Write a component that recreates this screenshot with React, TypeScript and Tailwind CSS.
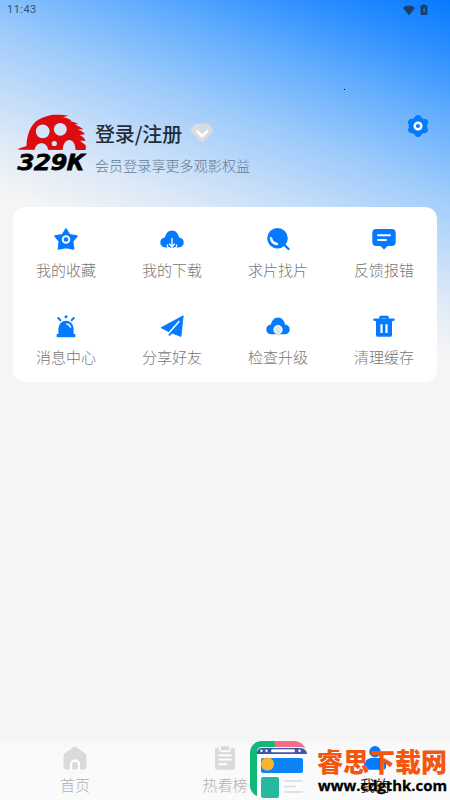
import type { ReactNode } from "react";

type Item = { label: string; icon: ReactNode };

const BLUE = "#067aff";

/* ── Menu icons, all on a 24 unit grid ── */
const menu: Item[] = [
  {
    label: "我的收藏",
    icon: (
      <>
        <path
          d="M12 2l3.500 5.700 7.500 1.300-4.300 5.400.9 7.600-7.600-1.500-7.600 1.500.9-7.600L1 9l7.500-1.300z"
          fill={BLUE}
          stroke={BLUE}
          strokeWidth="1.500"
          strokeLinejoin="round"
        />
        <circle cx="12" cy="12.500" r="3.300" fill="none" stroke="#fff" strokeWidth="1.900" />
      </>
    ),
  },
  {
    label: "我的下载",
    icon: (
      <>
        <path
          d="M5.600 20.500C2.400 20.500.3 18.500.3 15.600c0-2.700 1.900-4.800 4.600-5C5.800 6.400 8.400 3.600 12 3.600s6.200 2.800 7.100 7c2.700.2 4.600 2.300 4.600 5 0 2.900-2.100 4.900-5.300 4.900z"
          fill={BLUE}
        />
        <path d="M12 11v8.500M9.200 16.800l2.800 2.900 2.800-2.900" fill="none" stroke="#fff" strokeWidth="1.300" />
        <path d="M7.200 17.500c0 2 1 3.500 2.800 4M16.800 17.500c0 2-1 3.500-2.800 4" fill="none" stroke="#fff" strokeWidth="1.200" />
      </>
    ),
  },
  {
    label: "求片找片",
    icon: (
      <>
        <circle cx="11.500" cy="11.300" r="10.300" fill={BLUE} />
        <path d="M17.500 17l5 5" stroke={BLUE} strokeWidth="2.300" strokeLinecap="round" />
        <path d="M5 11.300c.5 3 2.700 5.200 5.900 5.600" fill="none" stroke="#fff" strokeWidth="2.500" strokeLinecap="round" />
      </>
    ),
  },
  {
    label: "反馈报错",
    icon: (
      <>
        <path
          d="M4 2h16c2.200 0 3.700 1.500 3.700 3.700v9.600c0 2.200-1.500 3.700-3.700 3.700h-4.500L12 22.500 8.500 19H4C1.800 19 .3 17.500.3 15.300V5.700C.3 3.500 1.800 2 4 2z"
          fill={BLUE}
        />
        <path d="M6 8.300h12M6 13h8" stroke="#fff" strokeWidth="1.900" strokeLinecap="round" />
      </>
    ),
  },
  {
    label: "消息中心",
    icon: (
      <>
        <path d="M4.400 20V14.300a7.600 7.600 0 0 1 15.200 0V20h1.700v3.200H2.700V20z" fill={BLUE} />
        <circle cx="12" cy="2.800" r="1.500" fill={BLUE} />
        <path d="M4.200 4l2.200 2.200M19.800 4l-2.200 2.200" stroke={BLUE} strokeWidth="2" strokeLinecap="round" />
        <path d="M13 9.900c1.900.3 3 1.400 3.400 3.300" fill="none" stroke="#fff" strokeWidth="1.500" strokeLinecap="round" />
      </>
    ),
  },
  {
    label: "分享好友",
    icon: (
      <>
        <path
          d="M23.200 1.800L21 22.500l-8.500-3.300L9.200 21.600 8 17.200 1 13.700z"
          fill={BLUE}
          stroke={BLUE}
          strokeWidth=".8"
          strokeLinejoin="round"
        />
        <path d="M19 7.500L8.400 19.500" stroke="#fff" strokeWidth="1.600" strokeLinecap="round" />
      </>
    ),
  },
  {
    label: "检查升级",
    icon: (
      <>
        <path
          d="M5.600 20.300C2.400 20.300.3 18.300.3 15.400c0-2.700 1.900-4.700 4.600-5C5.800 6.200 8.400 3.400 12 3.400s6.200 2.800 7.100 7c2.700.3 4.600 2.300 4.600 5 0 2.900-2.100 4.900-5.300 4.900z"
          fill={BLUE}
        />
        <circle cx="12" cy="15.700" r="4.700" fill="#f1f4f8" />
        <path d="M12 11.500l4.300 4.700h-2.600v5.400h-3.400v-5.400H7.700z" fill="#e0e2e4" />
      </>
    ),
  },
  {
    label: "清理缓存",
    icon: (
      <>
        <path d="M8.500 6V3h7v3" fill="none" stroke={BLUE} strokeWidth="2.400" strokeLinejoin="round" />
        <path d="M2.600 5.800h18.800" stroke={BLUE} strokeWidth="2.600" strokeLinecap="round" />
        <path d="M4 6h16v14.900a1.900 1.900 0 0 1-1.900 1.900H5.900A1.900 1.900 0 0 1 4 20.900z" fill={BLUE} />
        <path d="M9.500 10.300v8.800M14.500 10.300v8.800" stroke="#fff" strokeWidth="2.200" />
      </>
    ),
  },
];

const tabs: (Item & { active?: boolean })[] = [
  {
    label: "首页",
    icon: (
      <>
        <path
          d="M10.500 1.300a2.600 2.600 0 0 1 3 0l8.700 6c.9.6 1.300 1.400 1.300 2.400v11c0 1.600-1.100 2.800-2.800 2.800H3.300C1.600 23.500.5 22.300.5 20.700v-11c0-1 .4-1.800 1.300-2.400z"
          fill="#dadada"
        />
        <path d="M8 24v-5.500a4 4 0 0 1 8 0V24" fill="none" stroke="#fff" strokeWidth="2.300" />
      </>
    ),
  },
  {
    label: "热看榜",
    icon: (
      <>
        <rect x="2" y="1.800" width="20" height="22" rx="2.600" fill="#dadada" />
        <path d="M6.800 1v2.200c0 1.200.8 2 2 2h6.400c1.200 0 2-.8 2-2V1" fill="none" stroke="#fff" strokeWidth="1.500" />
        <rect x="8" y=".2" width="8" height="3.600" rx="1" fill="#dadada" />
        <path d="M6 9.300h12M6 13.700h12M6 18.200h7.500" stroke="#fff" strokeWidth="1.700" strokeLinecap="round" />
      </>
    ),
  },
  {
    label: "我的",
    active: true,
    icon: (
      <>
        <circle cx="12" cy="5.800" r="5.700" fill={BLUE} />
        <path d="M.8 20.500c0-5 3.700-8.500 8-8.500h6.400c4.300 0 8 3.500 8 8.500 0 2-1.200 3.300-3.200 3.300H4c-2 0-3.200-1.300-3.200-3.300z" fill={BLUE} />
      </>
    ),
  },
];

const gearLobes = [0, 60, 120, 180, 240, 300];

export default function App() {
  return (
    <div className="relative flex h-[800px] w-[450px] flex-col overflow-hidden bg-[#f5f5f5] bg-[linear-gradient(200deg,#067aff_0px,#2e90ff_52px,#64aefd_112px,#9ccafb_180px,#c0dbf9_235px,#dde9f7_283px,#f5f5f5_335px)] font-['Noto_Sans_CJK_SC',sans-serif]">
      <StatusBar />
      <Profile />

      {/* menu card */}
      <section className="mx-[13px] mt-[29px] grid h-[175px] grid-cols-4 grid-rows-[87px_88px] rounded-[12px] bg-white">
        {menu.map((m) => (
          <div key={m.label} className="flex flex-col items-center pt-5">
            <svg viewBox="0 0 24 24" className="h-6 w-6">
              {m.icon}
            </svg>
            <span className="mt-[8px] text-[15px] leading-[22px] font-light text-[#777]">{m.label}</span>
          </div>
        ))}
      </section>

      {/* bottom tabs */}
      <nav className="mt-auto grid h-[62px] grid-cols-3 bg-linear-to-b from-[#f6f6f6] to-[#fafafa] to-20%">
        {tabs.map((t) => (
          <div key={t.label} className="flex flex-col items-center pt-[8px]">
            <svg viewBox="0 0 24 24" className="h-6 w-6">
              {t.icon}
            </svg>
            <span
              className={`mt-[4px] text-[15px] leading-[22px] ${t.active ? "text-[#333]" : "font-light text-[#b0b0b0]"}`}
            >
              {t.label}
            </span>
          </div>
        ))}
      </nav>

      <Watermark />
      <span className="absolute top-[89px] left-[344px] h-px w-px bg-black" />
    </div>
  );
}

function StatusBar() {
  return (
    <div className="flex h-5 shrink-0 items-center pr-[22px] pl-[7px] text-[#17406b]">
      <span className="font-[Roboto,sans-serif] text-[11px] leading-5 tracking-[0.45px] text-[#36536f]">
        11:43
      </span>
      <svg viewBox="0 0 12 11" className="ml-auto h-[11px] w-3">
        <path d="M0 3C3.500-.2 8.500-.2 12 3L6 10.600z" fill="currentColor" />
      </svg>
      <svg viewBox="0 0 8 12" className="ml-[5px] h-3 w-2">
        <path d="M2 1.400V.6h4v.8h.6c.5 0 .9.4.9.900v7.800c0 .5-.4.9-.9.9H1.400c-.5 0-.9-.4-.9-.9V2.300c0-.5.4-.9.9-.9z" fill="currentColor" />
        <path d="M4.600 3.500L2.700 6.500h1.100v2.300l1.600-3H4.400z" fill="#3b83ca" />
      </svg>
    </div>
  );
}

function Profile() {
  return (
    <header className="mt-[92px] flex h-[66px] shrink-0 items-start pl-4">
      <Logo />
      <div className="ml-[7px] pt-[8px]">
        <div className="flex items-center">
          <h1 className="text-[20px] leading-[28px] font-medium tracking-[-0.15px] text-[#1f2d3a]">登录/注册</h1>
          <svg viewBox="0 0 24 20" className="mt-[-3px] ml-[8px] h-5 w-6">
            <path d="M7 .8h10c1.200 0 2 .4 2.700 1.300l3 4c.7 1 .7 1.900-.1 2.900l-8.500 9.600c-1.200 1.300-3 1.300-4.200 0L1.400 9c-.8-1-.8-1.900-.1-2.900l3-4C5 1.200 5.800.8 7 .8z" fill="#d9dbde" />
            <path d="M7.500 8.500l4.500 4.600 5-4.600" fill="none" stroke="#fff" strokeWidth="2.600" strokeLinecap="round" />
          </svg>
        </div>
        <p className="mt-[7px] text-[14px] leading-[20px] font-light tracking-[0.1px] text-[#64798f]">
          会员登录享更多观影权益
        </p>
      </div>
      <svg viewBox="0 0 24 24" className="mt-[2px] mr-5 ml-auto h-6 w-6" fill={BLUE}>
        <circle cx="12" cy="12" r="9.300" />
        {gearLobes.map((deg) => (
          <circle key={deg} cx="12" cy="4.200" r="3.200" transform={`rotate(${deg} 12 12)`} />
        ))}
        <circle cx="12" cy="12" r="3.300" fill="none" stroke="#fff" strokeWidth="2.500" />
      </svg>
    </header>
  );
}

/* Film reel rolling over the brand name */
function Logo() {
  return (
    <svg viewBox="0 0 72 62" className="h-[62px] w-[72px]">
      <path
        d="M2 37.800l1-1.300 7.500-2.500c.2-4 .5-7.500 1.500-11 1.500-5.500 4-10 7.500-13.300C22.500 7.300 26 5.700 29.500 4.700 33 3.300 36 2.700 39 2.700c4.500-.2 9 0 13 1l-5 1.600c3 .6 6.500 1.700 8.700 3.200l-2.200.5c3 .5 6.500 1.500 8.500 3l-3.500.7c3.500 1 6.700 2.500 8.800 4.600l-5.500.2c3 1 6 2.700 7.200 4.800l-5.500.7c2.700 1.200 5.200 3.200 6.200 5.700H64l5.700 4.500V38z"
        fill="#dc0c10"
      />
      <g fill="#d3e5f9">
        <circle cx="26.700" cy="19.300" r="6.900" />
        <circle cx="44.300" cy="17.300" r="6.400" />
        <circle cx="38.300" cy="31.500" r="2.600" />
        <path d="M18.500 38.200c.8-4.500 3.500-7 7-7s6.200 2.500 6.800 7zM46.700 38.200c.3-6.500 3-10.200 6.600-10.200s6 3.700 6.300 10.200z" />
      </g>
      <text
        x="2"
        y="57.800"
        textLength="66"
        lengthAdjust="spacingAndGlyphs"
        fill="#000"
        stroke="#000"
        strokeWidth="0.8"
        className="font-['DejaVu_Sans_Mono',monospace] text-[21px] font-bold italic"
      >
        329K
      </text>
    </svg>
  );
}

function Watermark() {
  return (
    <div className="absolute top-[740px] left-[249px] flex items-start">
      <svg viewBox="0 0 58 58" className="h-[58px] w-[58px]">
        <path d="M13 1h15v56H13C6 57 1 52 1 45V13C1 6 6 1 13 1z" fill="#12b877" />
        <path d="M25 1h20c7 0 12 5 12 12v3H29z" fill="#f56b8c" />
        <path d="M8 12c0-3 2-5 5-5h39c4 0 6 3 6 6v45H8z" fill="#fafbfc" />
        <path d="M8 13c0-3 2-5 5-5h38c4 0 7 3 7 6H8z" fill="#3f58a8" />
        <g fill="#fff">
          <circle cx="12.500" cy="10.800" r="1.200" />
          <circle cx="17.500" cy="10.800" r="1.200" />
          <rect x="22" y="9.300" width="24" height="3" rx="1.500" />
          <circle cx="50.500" cy="10.800" r="1.300" />
        </g>
        <rect x="12" y="18" width="42" height="15" rx="2" fill="#0d84f5" />
        <circle cx="18.500" cy="24" r="6.600" fill="#fbb32c" />
        <rect x="12" y="37" width="18" height="21" rx="2" fill="#27b8a0" />
        <path d="M36 41h17M36 46.500h10M36 52h17" stroke="#dfe1e3" strokeWidth="2" strokeLinecap="round" />
      </svg>
      <div className="mt-[6px] ml-[10px] w-[133px]">
        <p className="text-[26px] leading-[30px] font-black whitespace-nowrap text-[#f4560f]">睿思下载网</p>
        <svg viewBox="0 0 133 20" className="mt-px h-5 w-[133px]">
          <text
            x="1"
            y="13.500"
            textLength="129"
            lengthAdjust="spacingAndGlyphs"
            fill="#000"
            stroke="#000"
            strokeWidth="0.3"
            className="font-['Open_Sans',sans-serif] text-[15px] font-bold"
          >
            www.cdgthk.com
          </text>
        </svg>
      </div>
    </div>
  );
}
